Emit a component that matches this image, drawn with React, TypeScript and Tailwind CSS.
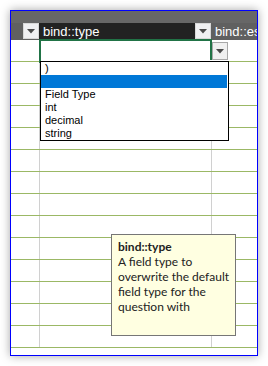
const rows = Array.from({ length: 14 });

const Arrow = () => (
  <svg width="8" height="5" viewBox="0 0 8 5">
    <path d="M0 0H8L4 4.5Z" fill="#4a4a4a" />
  </svg>
);

const items = [")", "", "Field Type", "int", "decimal", "string"];

function App() {
  return (
    <div className="w-[268px] h-[366px] bg-white pt-[10px] pl-[10px]">
      <div className="relative w-[248px] h-[346px] border border-[#0000ff] bg-white overflow-hidden shadow-[0_0_9px_rgba(0,0,0,0.35)] font-['Liberation_Sans',sans-serif]">
        {/* header */}
        <div className="h-[12px] bg-[#676767]" />
        <div className="flex h-[17px] bg-[#606060]">
          <div className="w-[12px]" />
          <div className="w-[16px] h-[16px] flex items-center justify-center bg-[#f0f0f2] border border-[#d8d8d8]">
            <Arrow />
          </div>
          <div className="w-[156px] bg-[#222222] text-white text-[13px] leading-[17px] pl-[4px] whitespace-nowrap">
            bind::type
          </div>
          <div className="w-[16px] h-[16px] flex items-center justify-center bg-[#f0f0f2] border border-[#d8d8d8]">
            <Arrow />
          </div>
          <div className="flex-1 text-white text-[13px] leading-[17px] pl-[4px] whitespace-nowrap overflow-hidden">
            bind::esp
          </div>
        </div>
        {/* grid */}
        <div className="flex flex-col">
          {rows.map((_, i) => (
            <div
              key={i}
              className="flex h-[22px] shrink-0 border-b border-[#9bb865]"
            >
              <div className="w-[29px] border-r border-[#d0d0d0]" />
              <div className="w-[172px] border-r border-[#d0d0d0]" />
              <div className="flex-1" />
            </div>
          ))}
        </div>

        {/* active cell */}
        <div className="absolute left-[28px] top-[28px] w-[173px] h-[24px] border-2 border-[#217346]" />
        <div className="absolute left-[198px] top-[49px] w-[4px] h-[4px] bg-[#217346] border border-white" />
        {/* validation dropdown button */}
        <div className="absolute left-[201px] top-[31px] w-[16px] h-[18px] flex items-center justify-center bg-[#f0f0f0] border border-[#a8a8a8]">
          <Arrow />
        </div>

        {/* list */}
        <div className="absolute left-[29px] top-[50px] w-[189px] border border-black bg-white text-[11px] leading-[13px] text-black">
          {items.map((t, i) => (
            <div
              key={i}
              className={
                i === 1
                  ? "h-[13px] mr-[1px] bg-[#0078d7] pl-[4px]"
                  : "h-[13px] pl-[4px]"
              }
            >
              {t}
            </div>
          ))}
        </div>

        {/* tooltip */}
        <div className="absolute left-[100px] top-[223px] w-[125px] h-[102px] border border-[#767676] bg-[#ffffe1] pl-[6px] pt-[4px] text-[12px] leading-[15px] text-[#222] font-['Lato',sans-serif]">
          <div className="font-bold">bind::type</div>
          <div>A field type to</div>
          <div>overwrite the default</div>
          <div>field type for the</div>
          <div>question with</div>
        </div>
      </div>
    </div>
  );
}

export default App;
